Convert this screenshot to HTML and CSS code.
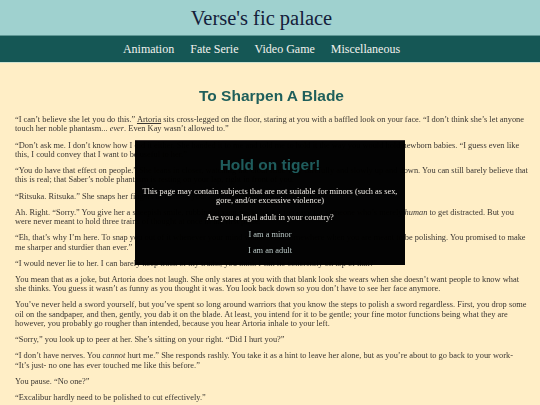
FILE: index.html
```html
<!DOCTYPE html>
<html lang="en">
<head>
    <meta charset="UTF-8">
    <meta name="viewport" content="width=device-width, initial-scale=1.0">
    <title>To Sharpen A Blade - Verse's fic palace</title>
    <link rel="stylesheet" href="styles.css">
</head>
<body>

    <!-- Header -->
    <header>
        <h1>Verse's fic palace</h1>
    </header>
    <nav>
        <a href="#">Animation</a>
        <a href="#">Fate Serie</a>
        <a href="#">Video Game</a>
        <a href="#">Miscellaneous</a>
    </nav>

    <!-- Story -->
    <main class="story">
        <h2>To Sharpen A Blade</h2>
        <p>“I can’t believe she let you do this.” <u>Artoria</u> sits cross-legged on the floor, staring at you with a baffled look on your face. “I don’t think she’s let anyone touch her noble phantasm... <em>ever</em>. Even Kay wasn’t allowed to.”</p>
        <p>“Don’t ask me. I don’t know how I did it either. She handed it to me and told me to hold it the way you would hold newborn babies. “I guess even like this, I could convey that I want to be useful to her.”</p>
        <p>“You do have that effect on people.” She leans in closer, watching the cloth slide very carefully and slowly up and down. You can still barely believe that this is real; that Saber’s noble phantasm is resting on your lap, right in front of you.</p>
        <p>“Ritsuka. Ritsuka.” She snaps her fingers in front of your eyes, and you blink.</p>
        <p>Ah. Right. “Sorry.” You give her a sheepish smile, rubbing at your neck. It’s far too easy for someone who’s merely <em>human</em> to get distracted. But you were never meant to hold three trains of thought at once in the first place.</p>
        <p>“Eh, that’s why I’m here. To snap you out of it whenever your mind wanders off somewhere when you are meant to be polishing. You promised to make me sharper and sturdier than ever.”</p>
        <p>“I would never lie to her. I can barely keep track of my truths, you think I can lie coherently on top of that?”</p>
        <p>You mean that as a joke, but Artoria does not laugh. She only stares at you with that blank look she wears when she doesn’t want people to know what she thinks. You guess it wasn’t as funny as you thought it was. You look back down so you don’t have to see her face anymore.</p>
        <p>You’ve never held a sword yourself, but you’ve spent so long around warriors that you know the steps to polish a sword regardless. First, you drop some oil on the sandpaper, and then, gently, you dab it on the blade. At least, you intend for it to be gentle; your fine motor functions being what they are however, you probably go rougher than intended, because you hear Artoria inhale to your left.</p>
        <p>“Sorry,” you look up to peer at her. She’s sitting on your right. “Did I hurt you?”</p>
        <p>“I don’t have nerves. You <em>cannot</em> hurt me.” She responds rashly. You take it as a hint to leave her alone, but as you’re about to go back to your work- “It’s just- no one has ever touched me like this before.”</p>
        <p>You pause. “No one?”</p>
        <p>“Excalibur hardly need to be polished to cut effectively.”</p>
    </main>

    <!-- Age check popup -->
    <div class="age-gate">
        <h3>Hold on tiger!</h3>
        <p>This page may contain subjects that are not suitable for minors (such as sex, gore, and/or excessive violence)</p>
        <p>Are you a legal adult in your country?</p>
        <a href="#">I am a minor</a>
        <a href="#">I am an adult</a>
    </div>

</body>
</html>
```

FILE: styles.css
```css
body {
    font-family: "Liberation Serif", serif;
    margin: 0;
    padding: 0;
    background: #ffeec6;
    color: #3a3632;
    height: 405px;
    overflow: hidden;
}

header {
    background-color: #9fd1cf;
    height: 35px;
    display: flex;
    justify-content: center;
    align-items: center;
    padding-right: 17px;
    border-bottom: 1px solid #5f9896;
}

header h1 {
    font-weight: normal;
    font-size: 20.5px;
    margin: 1px 0 0;
    color: #14203a;
}

nav {
    background-color: #155755;
    height: 26px;
    display: flex;
    justify-content: center;
    align-items: center;
    gap: 16px;
    padding-right: 17px;
    border-bottom: 1px solid #cfe1d0;
}

nav a {
    color: #f2f2ee;
    font-size: 12px;
    text-decoration: none;
}

.story {
    padding: 12px 12px 0 15px;
    will-change: transform;
}

.story h2 {
    font-family: "Liberation Sans", sans-serif;
    font-size: 15.5px;
    color: #1f5f5b;
    text-align: center;
    margin: 12px 0 10px;
}

.story p {
    font-size: 8.4px;
    line-height: 9.4px;
    margin: 0 0 6.7px;
}

.age-gate {
    position: fixed;
    left: 135px;
    top: 140px;
    width: 270px;
    height: 125px;
    box-sizing: border-box;
    background: rgba(0, 0, 0, 0.99);
    border-top: 1px solid #3a3330;
    color: #eeeae4;
    text-align: center;
    padding: 15px 6px 0;
    will-change: transform;
}

.age-gate h3 {
    font-family: "Liberation Sans", sans-serif;
    font-size: 15.5px;
    color: #1f5c5c;
    margin: 0 0 13px;
}

.age-gate p {
    font-size: 8.4px;
    line-height: 9.4px;
    margin: 0 0 7.2px;
}

.age-gate a {
    display: block;
    color: #b8c6c4;
    font-size: 8.4px;
    line-height: 9.4px;
    text-decoration: none;
    margin-bottom: 7.2px;
}
```
